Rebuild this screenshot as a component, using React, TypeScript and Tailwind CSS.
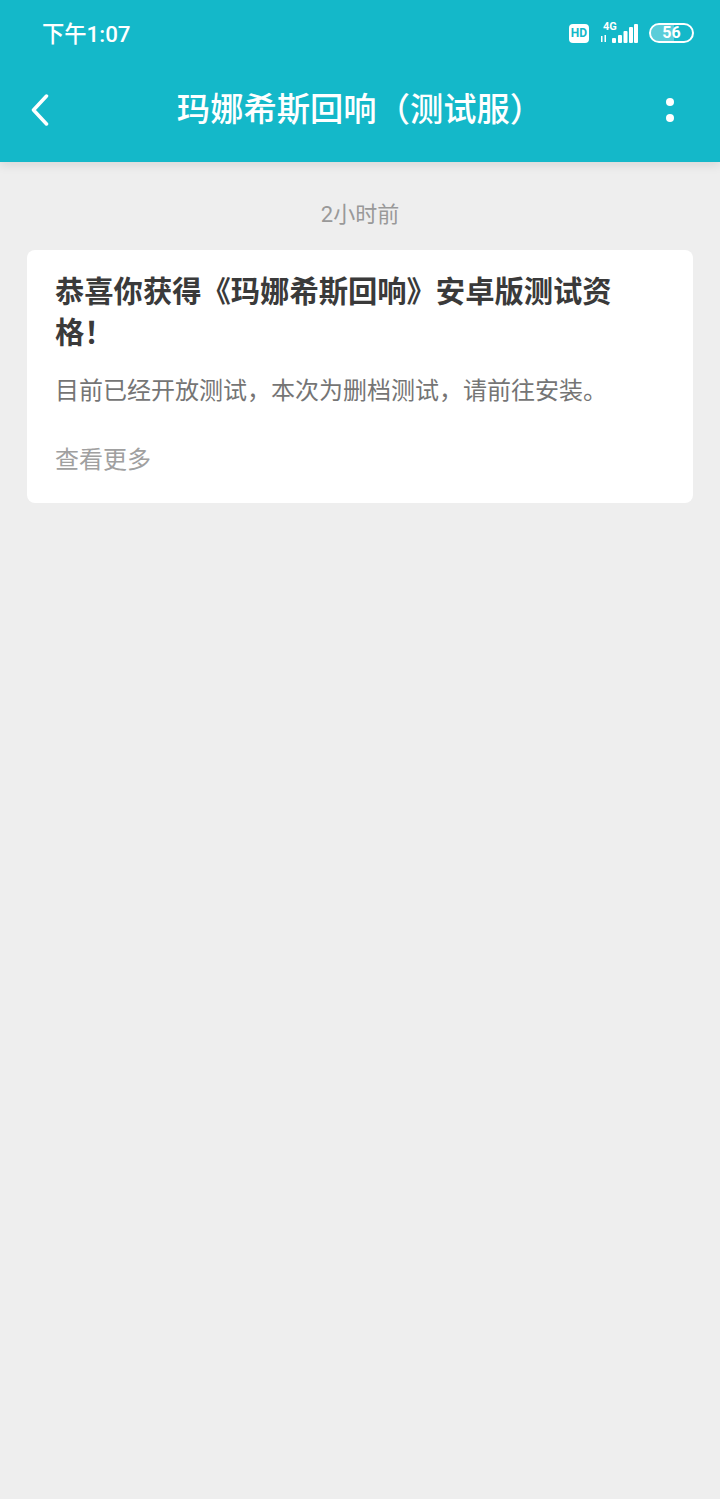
const font = { fontFamily: '"Roboto", "Noto Sans CJK SC", sans-serif' };

function StatusIcons() {
  return (
    <div className="flex items-center gap-[11px]">
      <div className="flex h-[19px] w-[20px] items-center justify-center rounded-[4px] bg-white">
        <span className="text-[12px] font-bold leading-none text-[#14b8c9]">HD</span>
      </div>
      <svg width="38" height="24" viewBox="0 0 38 24" fill="white">
        <text x="3" y="9" fontSize="11" fontWeight="700" fontFamily="Roboto, sans-serif">4G</text>
        <rect x="1" y="15" width="1.5" height="6" />
        <rect x="4.5" y="14" width="1.5" height="7" />
        <rect x="12" y="17" width="4" height="5" rx="1" />
        <rect x="18" y="14" width="4" height="8" rx="1" />
        <rect x="23.5" y="10" width="4" height="12" rx="1" />
        <rect x="29" y="6" width="4" height="16" rx="1" />
        <rect x="34" y="3" width="4" height="19" rx="1" />
      </svg>
      <div className="relative flex h-[20px] w-[45px] items-center justify-center overflow-hidden rounded-full border-2 border-white">
        <div className="absolute inset-y-0 left-0 w-[56%] bg-white/30" />
        <span className="relative text-[16px] font-bold leading-none text-white">56</span>
      </div>
    </div>
  );
}

function Header() {
  return (
    <header className="h-[162px] bg-[#14b8c9] text-white shadow-[0_3px_10px_rgba(0,0,0,0.1)]">
      <div className="flex h-[66px] items-center justify-between pl-[42px] pr-[26px]">
        <span className="pt-[2px] text-[22.3px] font-medium leading-none">下午1:07</span>
        <StatusIcons />
      </div>
      <div className="flex h-[88px] items-center justify-between pl-[30px] pr-[46px]">
        <svg width="20" height="32" viewBox="0 0 20 32" fill="none" stroke="white" strokeWidth="3.5" strokeLinecap="round" strokeLinejoin="round">
          <path d="M16.5 2 L3.5 16 L16.5 30" />
        </svg>
        <h1 className="ml-[4px] text-[33.3px] font-medium leading-none">玛娜希斯回响（测试服）</h1>
        <div className="flex flex-col gap-[8px]">
          <div className="h-[8px] w-[8px] rounded-full bg-white" />
          <div className="h-[8px] w-[8px] rounded-full bg-white" />
        </div>
      </div>
    </header>
  );
}

export default function App() {
  return (
    <div className="min-h-[1499px] bg-[#eeeeee]" style={font}>
      <Header />
      <main className="px-[27px]">
        <p className="pt-[40px] text-center text-[22px] leading-[26px] text-[#999999]">2小时前</p>
        <div className="mt-[22px] h-[253px] rounded-[8px] bg-white px-[28px] pt-[22px]">
          <h2 className="text-[29.3px] font-bold leading-[41px] text-[#3a3a3a]">恭喜你获得《玛娜希斯回响》安卓版测试资格！</h2>
          <p className="mt-[21px] text-[24px] leading-[32px] text-[#757575]">目前已经开放测试，本次为删档测试，请前往安装。</p>
          <p className="mt-[37px] text-[24px] leading-[32px] text-[#a0a0a0]">查看更多</p>
        </div>
      </main>
    </div>
  );
}
